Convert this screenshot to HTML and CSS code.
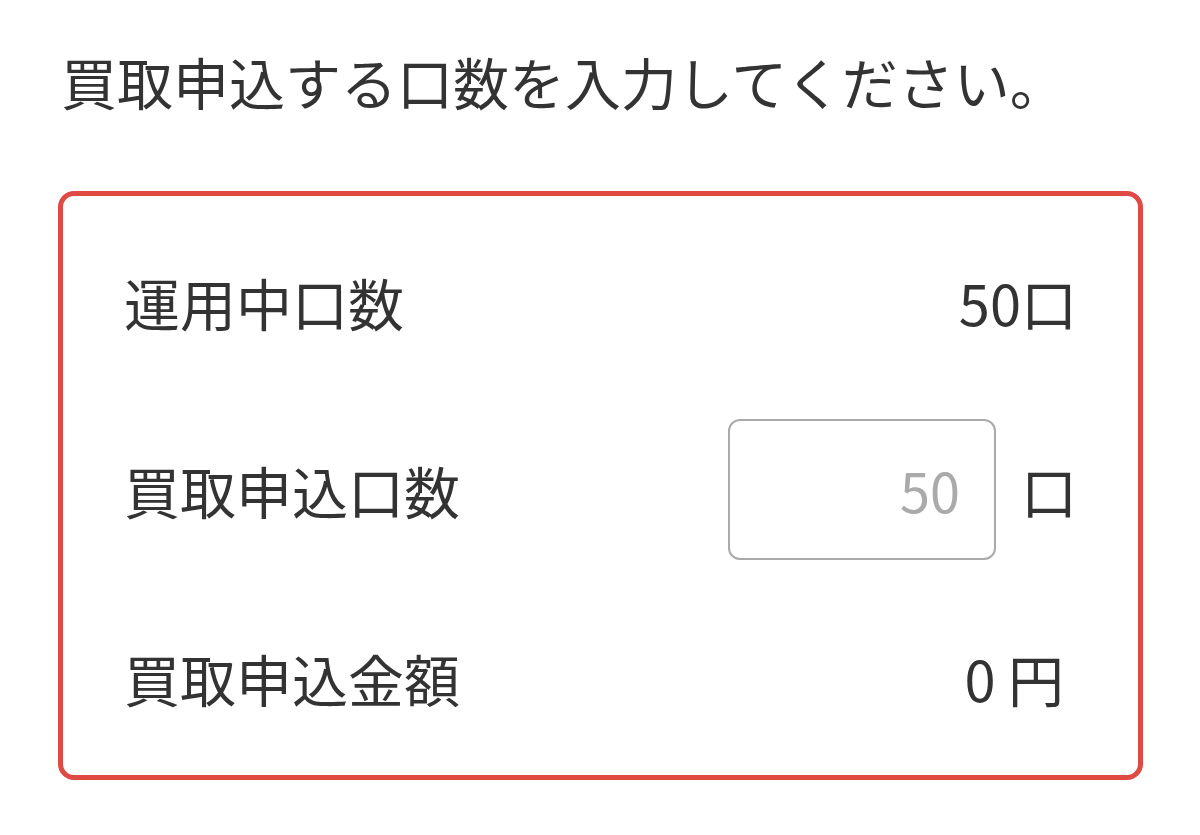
FILE: index.html
```html
<!DOCTYPE html>
<html lang="ja">
<head>
    <meta charset="UTF-8">
    <meta name="viewport" content="width=device-width, initial-scale=1.0">
    <title>買取申込</title>
    <link rel="stylesheet" href="styles.css">
</head>
<body>
    <div class="page">
        <p class="lead">買取申込する口数を入力してください。</p>
        <div class="panel">
            <div class="row">
                <span class="label">運用中口数</span>
                <span class="value">50口</span>
            </div>
            <div class="row">
                <span class="label">買取申込口数</span>
                <input type="text" class="count" placeholder="50">
                <span class="unit">口</span>
            </div>
            <div class="row">
                <span class="label">買取申込金額</span>
                <span class="value yen">0 円</span>
            </div>
        </div>
    </div>
</body>
</html>
```

FILE: styles.css
```css
body {
    font-family: "Noto Sans CJK JP", "Noto Sans", sans-serif;
    color: #333;
    background: #fff;
    margin: 0;
    padding: 0;
}
.page {
    padding: 49px 57px 0 58px;
}
.lead {
    margin: 0 0 0 3px;
    font-size: 56px;
    line-height: 64px;
}
.panel {
    margin-top: 78px;
    height: 589px;
    box-sizing: border-box;
    border: 5px solid #e04a45;
    border-radius: 16px;
    padding: 11px 61px 0 61px;
}
.row {
    display: flex;
    align-items: center;
    height: 188px;
    font-size: 56px;
}
.label {
    flex: 1;
}
.value.yen {
    padding-right: 13px;
}
.count {
    width: 268px;
    height: 141px;
    box-sizing: border-box;
    border: 2px solid #aaa;
    border-radius: 12px;
    padding: 0 34px 0 10px;
    font-family: inherit;
    font-size: 54px;
    text-align: right;
    color: #333;
    outline: none;
}
.count::placeholder {
    color: #aaa;
}
.unit {
    margin-left: 25px;
}
```
